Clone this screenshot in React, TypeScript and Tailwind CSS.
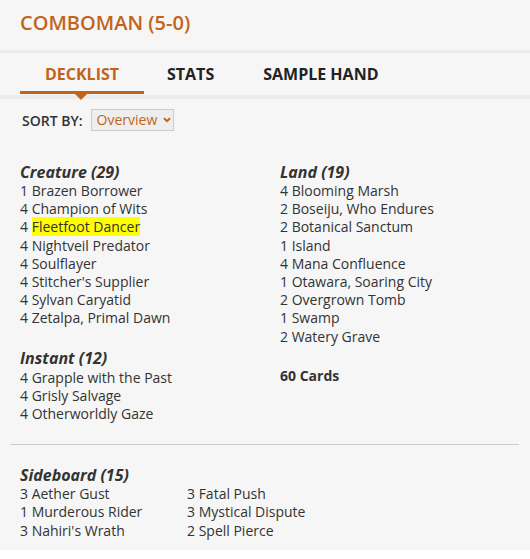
import React from "react";

const creatures = [
  "1 Brazen Borrower",
  "4 Champion of Wits",
  "4 Fleetfoot Dancer",
  "4 Nightveil Predator",
  "4 Soulflayer",
  "4 Stitcher's Supplier",
  "4 Sylvan Caryatid",
  "4 Zetalpa, Primal Dawn",
];
const instants = ["4 Grapple with the Past", "4 Grisly Salvage", "4 Otherworldly Gaze"];
const lands = [
  "4 Blooming Marsh",
  "2 Boseiju, Who Endures",
  "2 Botanical Sanctum",
  "1 Island",
  "4 Mana Confluence",
  "1 Otawara, Soaring City",
  "2 Overgrown Tomb",
  "1 Swamp",
  "2 Watery Grave",
];
const sideA = ["3 Aether Gust", "1 Murderous Rider", "3 Nahiri's Wrath"];
const sideB = ["3 Fatal Push", "3 Mystical Dispute", "2 Spell Pierce"];

function Header({ children }: { children: React.ReactNode }) {
  return <div className="text-[16px] leading-[20px] font-bold italic text-[#333]">{children}</div>;
}

function Item({ text }: { text: string }) {
  if (text === "4 Fleetfoot Dancer") {
    return (
      <div className="text-[14px] leading-[18.2px]">
        4 <span className="bg-[#ffff00]">Fleetfoot Dancer</span>
      </div>
    );
  }
  return <div className="text-[14px] leading-[18.2px]">{text}</div>;
}

export default function App() {
  return (
    <div className="w-[530px] bg-white font-['Open_Sans',sans-serif] text-[#333]">
      <div className="bg-[#f6f6f6] pb-[10px]">
        <div className="pl-5 pt-[9px] pb-[14px] text-[20px] leading-[27px] font-semibold text-[#c1641a]">
          COMBOMAN (5-0)
        </div>
        <div className="h-[3px] bg-[#ebebeb]" />
        <div className="relative h-[42px] pl-5 flex items-start">
          <div className="relative w-[124px] h-full flex justify-center pt-[10px]">
            <span className="text-[16px] leading-[22px] font-bold text-[#c1641a]">DECKLIST</span>
            <div className="absolute left-0 right-0 bottom-[1px] h-[3px] bg-[#c1641a]" />
            <div className="absolute left-[55px] bottom-[-5px] w-0 h-0 border-l-[6px] border-r-[6px] border-t-[6px] border-l-transparent border-r-transparent border-t-[#c1641a] z-10" />
          </div>
          <div className="ml-[23px] pt-[10px] text-[16px] leading-[22px] font-bold text-[#222]">STATS</div>
          <div className="ml-[49px] pt-[10px] text-[16px] leading-[22px] font-bold text-[#222]">SAMPLE HAND</div>
        </div>
        <div className="h-[4px] bg-[#ebebeb]" />
        <div className="pl-[22px] pt-[10px] flex items-center">
          <span className="text-[14px] font-semibold text-[#333]">SORT BY:</span>
          <div className="ml-[8px] h-[22px] w-[83px] border border-[#cccccc] bg-[#eeeeee] flex items-center pl-[5px]">
            <span className="text-[14px] leading-[18px] text-[#c1641a]">Overview</span>
            <svg className="ml-[6px]" width="8" height="6" viewBox="0 0 8 6">
              <path d="M1 1.2 L4 4.2 L7 1.2" stroke="#c1641a" strokeWidth="2" fill="none" />
            </svg>
          </div>
        </div>
        <div className="pl-5 pt-[31px] flex">
          <div className="w-[260px]">
            <Header>Creature (29)</Header>
            {creatures.map((c) => (
              <Item key={c} text={c} />
            ))}
            <div className="mt-[20px]">
              <div className="pb-px">
                <Header>Instant (12)</Header>
              </div>
              {instants.map((c) => (
                <Item key={c} text={c} />
              ))}
            </div>
          </div>
          <div>
            <Header>Land (19)</Header>
            {lands.map((c) => (
              <Item key={c} text={c} />
            ))}
            <div className="mt-[21px] text-[14px] leading-[18.2px] font-bold">60 Cards</div>
          </div>
        </div>
        <div className="mx-[10px] w-[509px] mt-[21px] h-px bg-[#cccccc]" />
        <div className="pl-5 pt-[20px]">
          <Header>Sideboard (15)</Header>
          <div className="flex">
            <div className="w-[167px]">
              {sideA.map((c) => (
                <Item key={c} text={c} />
              ))}
            </div>
            <div>
              {sideB.map((c) => (
                <Item key={c} text={c} />
              ))}
            </div>
          </div>
        </div>
      </div>
    </div>
  );
}
